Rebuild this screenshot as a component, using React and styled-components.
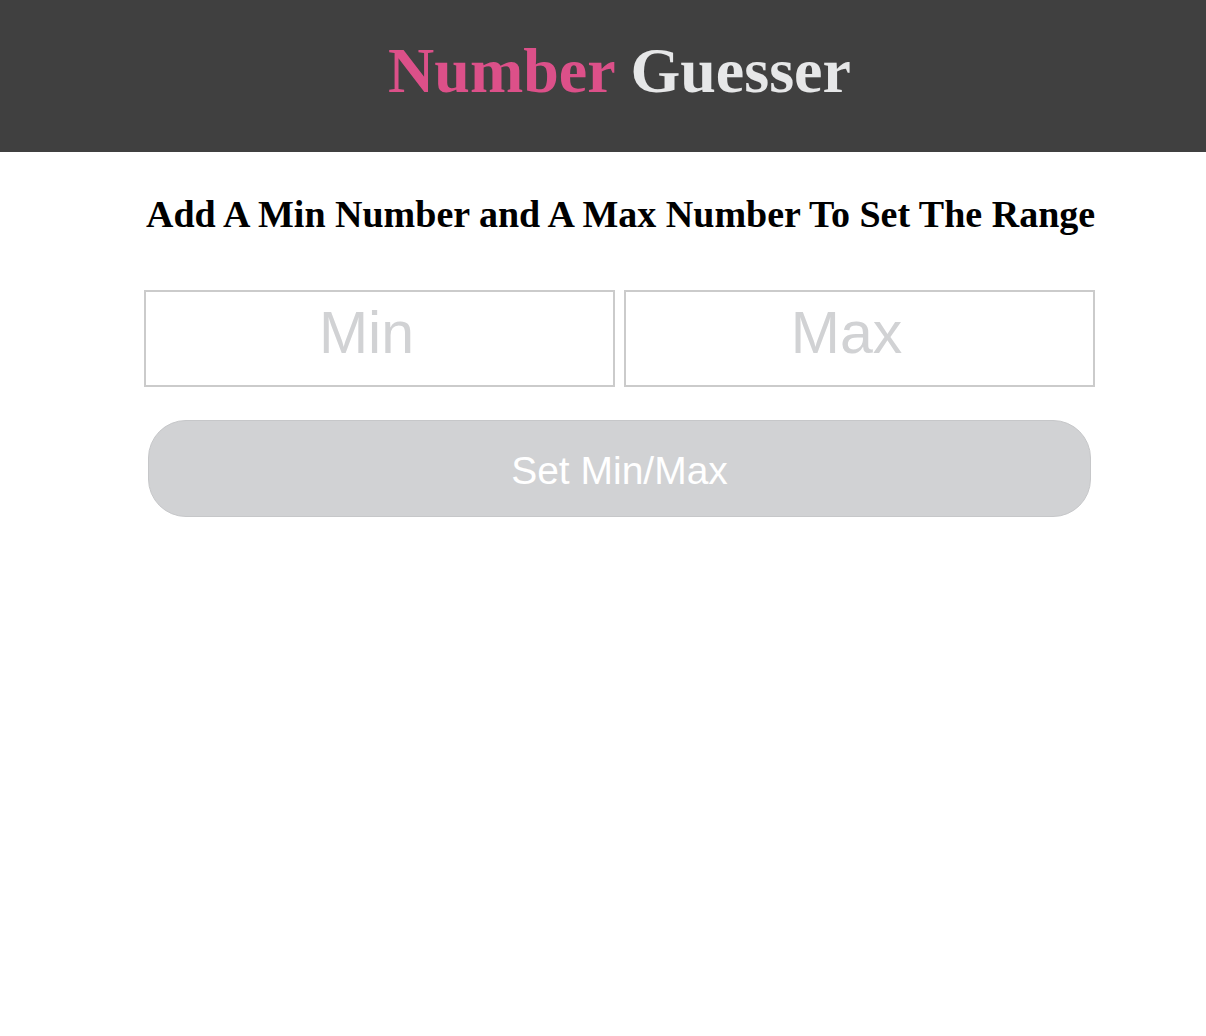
import React, { useState } from 'react'
import styled, { createGlobalStyle } from 'styled-components'

const GlobalStyle = createGlobalStyle`
    * {
        box-sizing: border-box;
    }
    body {
        margin: 0;
        background: #fff;
        font-family: "Liberation Serif", "Times New Roman", serif;
    }
`

function App() {
    const [min, setMin] = useState('')
    const [max, setMax] = useState('')

    return (
        <>
            <GlobalStyle />
            <HeaderStyled>
                <h1>
                    <span className="pink">Number</span> Guesser
                </h1>
            </HeaderStyled>
            <MainStyled>
                <h2>Add A Min Number and A Max Number To Set The Range</h2>
                <div className="range">
                    <RangeInput
                        type="number"
                        placeholder="Min"
                        value={min}
                        onChange={(e) => setMin(e.target.value)}
                    />
                    <RangeInput
                        type="number"
                        placeholder="Max"
                        value={max}
                        onChange={(e) => setMax(e.target.value)}
                    />
                </div>
                <SetButton disabled={!min || !max}>Set Min/Max</SetButton>
            </MainStyled>
        </>
    )
}

const HeaderStyled = styled.header`
    height: 152px;
    background: #404040;
    display: flex;
    align-items: center;
    justify-content: center;
    padding-left: 33px;
    h1 {
        margin: 0;
        font-size: 64px;
        font-weight: 700;
        color: #e6e7e8;
        padding-bottom: 10px;
    }
    .pink {
        color: #dc5089;
    }
`

const MainStyled = styled.main`
    width: 951px;
    margin-left: calc(50% - 459px);
    display: flex;
    flex-direction: column;
    h2 {
        margin: 40px 0 0;
        padding-left: 2px;
        text-align: center;
        font-size: 38px;
        font-weight: 700;
        color: #000;
        line-height: 44px;
        white-space: nowrap;
    }
    .range {
        display: flex;
        gap: 9px;
        margin-top: 54px;
    }
`

const RangeInput = styled.input`
    flex: 1;
    min-width: 0;
    height: 97px;
    border: 2px solid #cbcbcb;
    background: #fff;
    text-align: center;
    font-family: "Liberation Sans", Arial, sans-serif;
    font-size: 59px;
    color: #333;
    outline: none;
    padding: 0 26px 12px 0;
    appearance: textfield;
    &::placeholder {
        color: #d1d2d4;
    }
    &::-webkit-outer-spin-button,
    &::-webkit-inner-spin-button {
        -webkit-appearance: none;
        margin: 0;
    }
`

const SetButton = styled.button`
    margin: 33px 4px 0;
    height: 97px;
    border-radius: 38px;
    border: 1px solid #c6c7c9;
    background: #d1d2d4;
    color: #fff;
    font-family: "Liberation Sans", Arial, sans-serif;
    font-size: 39px;
    padding: 4px 0 0;
    cursor: pointer;
    &:disabled {
        cursor: default;
    }
`

export default App
